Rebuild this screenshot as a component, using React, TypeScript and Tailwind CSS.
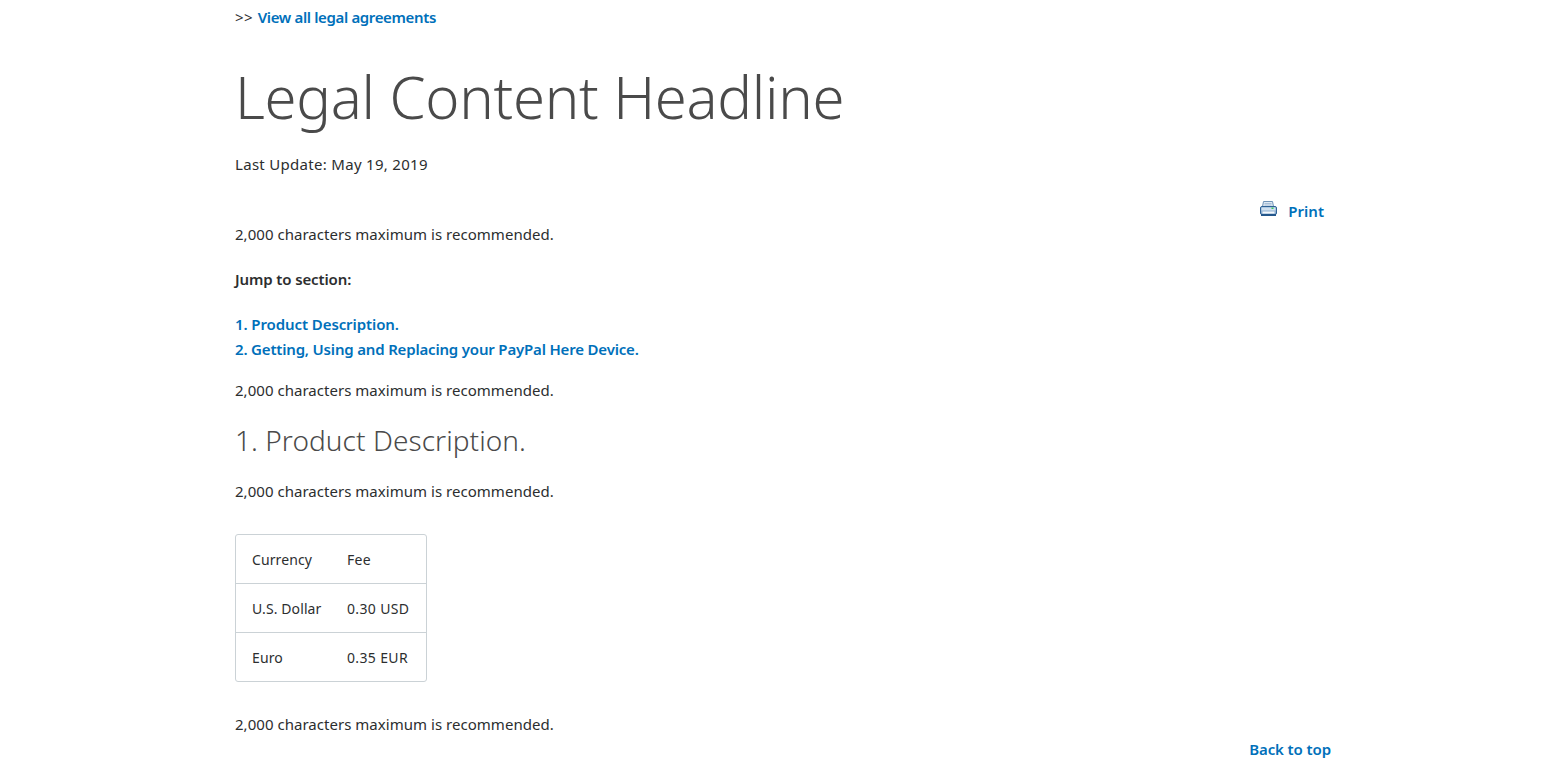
const BODY = "2,000 characters maximum is recommended.";

const PrinterIcon = () => (
  <svg width="17" height="16" viewBox="0 0 17 16" className="block mb-[6px]">
    <path d="M3.5 0.5h9l1 5h-11z" fill="#dfe9f3" stroke="#6f93b8" />
    <path d="M4.5 2.5h7M4.5 4h7" stroke="#a9c0d8" />
    <rect x="0.5" y="5.5" width="16" height="8" rx="1.5" fill="#8fb0d2" stroke="#2f6296" />
    <rect x="1.5" y="6.5" width="14" height="3" fill="#cfe0f0" />
    <rect x="11.5" y="6.5" width="2" height="1.5" fill="#3fc85f" />
    <rect x="2.5" y="10.5" width="12" height="2" fill="#f4f8fc" />
    <rect x="1" y="13" width="15" height="2" fill="#24578c" />
  </svg>
);

const rows = [
  ["Currency", "Fee"],
  ["U.S. Dollar", "0.30 USD"],
  ["Euro", "0.35 EUR"],
];

export default function App() {
  return (
    <div className="bg-white h-[764px] overflow-hidden font-['Noto_Sans',sans-serif] text-[15px] leading-[25px] text-[#2c2e2f]">
      <div className="w-[1097px] ml-[235px] pt-[5px]">
        <p>
          <span className="mr-[5px] tracking-[0.3px]">&gt;&gt;</span>
          <a className="font-semibold text-[#0070ba] tracking-[-0.36px]">View all legal agreements</a>
        </p>

        <h1 className="mt-[31px] text-[58px] leading-[72px] font-light tracking-[-0.3px] text-[#4a4a4a]">
          Legal Content Headline
        </h1>

        <p className="mt-[19px] tracking-[0.3px]">Last Update: May 19, 2019</p>

        <div className="mt-[22px] h-[23px] flex justify-end items-start pr-2">
          <a className="flex items-center gap-[11px] font-semibold text-[#0070ba]">
            <PrinterIcon />
            Print
          </a>
        </div>

        <p className="tracking-[0.03px]">{BODY}</p>
        <p className="mt-5 font-semibold tracking-[-0.12px]">Jump to section:</p>

        <div className="mt-5 font-semibold text-[#0070ba]">
          <a className="block tracking-[-0.09px]">1. Product Description.</a>
          <a className="block tracking-[-0.18px]">2. Getting, Using and Replacing your PayPal Here Device.</a>
        </div>

        <p className="mt-4 tracking-[0.03px]">{BODY}</p>

        <h2 className="mt-[17px] mb-[19px] text-[28px] leading-10 font-light tracking-[0.07px] text-[#4a4a4a]">
          1. Product Description.
        </h2>

        <p className="tracking-[0.03px]">{BODY}</p>

        <table className="mt-[30px] w-[192px] border-separate border-spacing-0 border border-[#cbd2d6] rounded-[3px] text-[14px]">
          <tbody>
            {rows.map((row, i) => (
              <tr key={row[0]} className={i > 0 ? "h-[49px]" : "h-[48px]"}>
                <td className={`pl-4 w-[111px] tracking-[0.1px] ${i > 0 ? "border-t border-[#cbd2d6]" : ""}`}>{row[0]}</td>
                <td className={`tracking-[0.35px] ${i > 0 ? "border-t border-[#cbd2d6]" : ""}`}>{row[1]}</td>
              </tr>
            ))}
          </tbody>
        </table>

        <p className="mt-[30px] tracking-[0.03px]">{BODY}</p>

        <div className="flex justify-end pr-px">
          <a className="font-semibold text-[#0070ba] tracking-[-0.1px]">Back to top</a>
        </div>
      </div>
    </div>
  );
}
